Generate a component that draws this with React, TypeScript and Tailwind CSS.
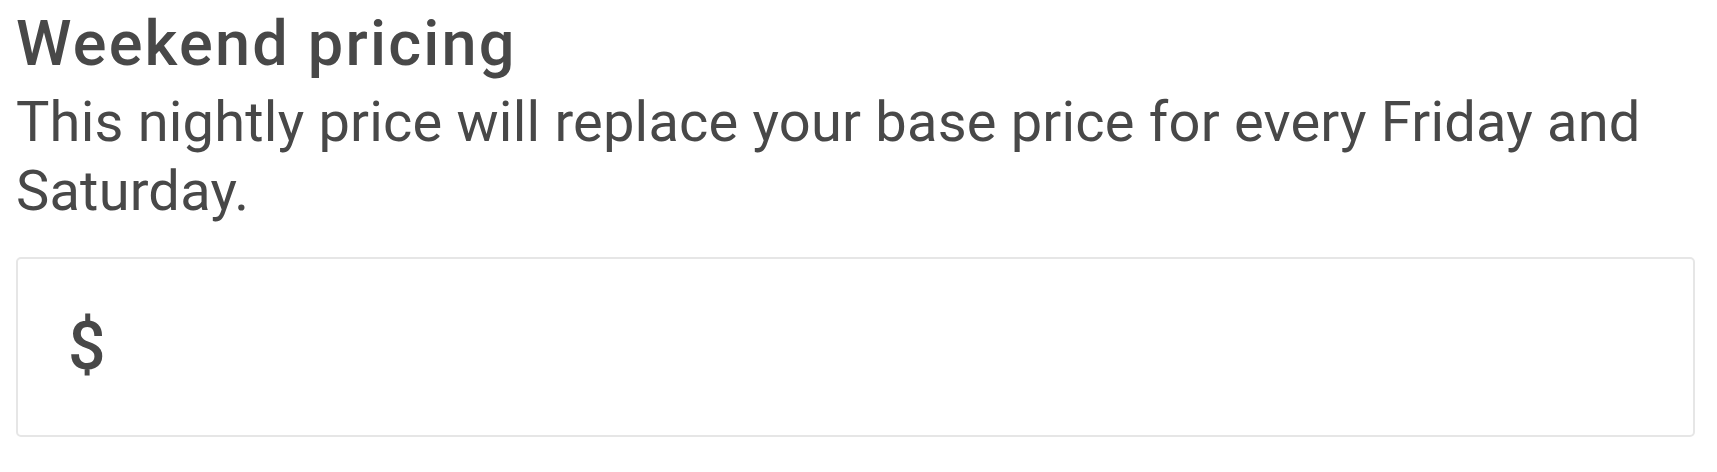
export default function App() {
  return (
    <div className="bg-white pl-4 pr-[22px] pt-2 font-['Roboto',sans-serif] text-[#484848]">
      <h2 className="text-[63px] leading-[72px] font-medium tracking-[2.2px]">Weekend pricing</h2>
      <p className="mt-2 text-[56px] leading-[69px] tracking-[0.2px]">
        This nightly price will replace your base price for every Friday and Saturday.
      </p>
      <div className="mt-[31px] flex h-[180px] items-center rounded-[5px] border-2 border-[#e6e6e6] pl-[50px]">
        <span className="text-[66px] font-medium leading-none">$</span>
        <input className="ml-4 h-full flex-1 bg-transparent text-[56px] outline-none" type="text" aria-label="Weekend price" />
      </div>
    </div>
  );
}
